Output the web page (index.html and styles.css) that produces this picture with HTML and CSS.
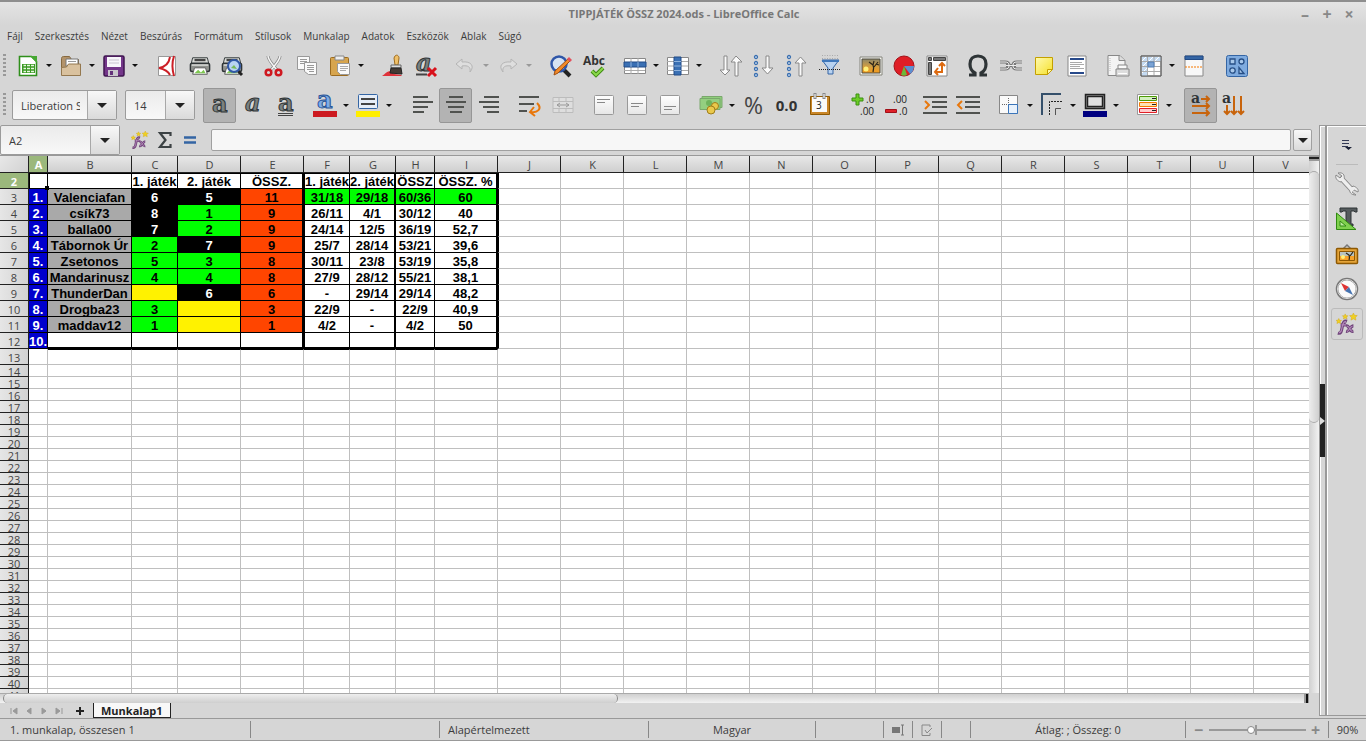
FILE: index.html
```html
<!DOCTYPE html>
<html lang="hu">
<head>
<meta charset="utf-8">
<title>TIPPJÁTÉK ÖSSZ 2024.ods - LibreOffice Calc</title>
<link rel="stylesheet" href="styles.css">
</head>
<body>
<svg class="defs" aria-hidden="true">
  <defs>
    <linearGradient id="sun" x1="0" y1="0" x2="0" y2="1"><stop offset="0" stop-color="#8d876a"/><stop offset=".6" stop-color="#d9a03c"/><stop offset="1" stop-color="#f59a1b"/></linearGradient>
    <linearGradient id="paper" x1="0" y1="0" x2="0" y2="1"><stop offset="0" stop-color="#fff"/><stop offset="1" stop-color="#e6e6e6"/></linearGradient>
    <linearGradient id="note" x1="0" y1="0" x2="1" y2="1"><stop offset="0" stop-color="#fffab0"/><stop offset="1" stop-color="#f5e02a"/></linearGradient>
  </defs>
  <symbol id="i-fx" viewBox="0 0 24 24"><path d="M2 22c4 1 4-3 5-8 1-4 2-6 5-5M5 13h6M11 14c4-1 3 7 8 6M19 14c-4 0-4 7-8 6" fill="none" stroke="#6f4379" stroke-width="3.400"/><path d="M3 21.500c3 .5 3-3 4-7.500 1-4 2-5 4-4.500M6 13h5M12 14.500c3-1 3 6 6 5.500M18 14.500c-3 0-4 6-6 5.500" fill="none" stroke="#b48abb" stroke-width="1.200"/><path d="M3 6l1 2 2 0-1.500 1.500.5 2-2-1-2 1 .5-2L0 8l2 0zM10 1l1 2h2l-1.500 1.500.5 2-2-1-2 1 .5-2L7 3h2zM19 0l1.200 2.500 3 .3-2 2 .5 3-2.700-1.400-2.700 1.400.5-3-2-2 3-.3z" fill="#f0d024" stroke="#d0a818" stroke-width=".5"/></symbol>
  <symbol id="i-sunset" viewBox="0 0 24 20"><path d="M1 1h22v18H1z" fill="#f5f5f0" stroke="#85857d"/><path d="M3 3h18v14H3z" fill="url(#sun)" stroke="#4c4a40"/><circle cx="7" cy="13" r="2.500" fill="#fff07a"/><path d="M14 16c1-4 1-5 0-7l-4-3M15 11l4-5M14 9l1-4M17 8l3 1" stroke="#2c2619" stroke-width="1.200" fill="none"/></symbol>
  <symbol id="i-printer" viewBox="0 0 24 22"><path d="M4 2h16l2 8H2z" fill="#d9dbd8" stroke="#2e3436"/><path d="M6 4.500h12" stroke="#444" stroke-width="2.500"/><rect x="1.500" y="8" width="21" height="9" rx="2" fill="#8f928e" stroke="#2e3436" stroke-width="1.500"/><path d="M3 10h18" stroke="#fff"/><path d="M6 13h12l2 7H4z" fill="#fff" stroke="#555"/><path d="M6 19l4-4 3 3 3-3 2 4z" fill="#7ec850"/></symbol>
</svg>

<header class="titlebar">
  <h1 class="title">TIPPJÁTÉK ÖSSZ 2024.ods - LibreOffice Calc</h1>
  <div class="winbtns"><button aria-label="Kis méret">–</button><button aria-label="Teljes méret">+</button><button aria-label="Bezárás">×</button></div>
</header>

<nav class="menubar">
  <button>Fájl</button><button>Szerkesztés</button><button>Nézet</button><button>Beszúrás</button><button>Formátum</button><button>Stílusok</button><button>Munkalap</button><button>Adatok</button><button>Eszközök</button><button>Ablak</button><button>Súgó</button>
</nav>

<div class="toolbar first">
  <span class="grip"></span>
  <button class="tool" aria-label="Új"><svg width="20" height="22"><path d="M1.500 1.500h12l5 5v14h-17z" fill="#fff" stroke="#2f8f1b" stroke-width="1.600"/><path d="M12 1h7v7z" fill="#46a832"/><path d="M4 9h13v9H4z" fill="#3a9a22"/><path d="M5.500 10.500h2.500M9 10.500h3M13 10.500h3M5.500 13.500h2.500M9 13.500h3M13 13.500h3M5.500 16.500h2.500M9 16.500h3M13 16.500h3" stroke="#e6f8de" stroke-width="1.500"/></svg></button><button class="drop" aria-label="Új menü"></button>
  <button class="tool" aria-label="Megnyitás"><svg width="22" height="22"><path d="M1.500 19V3.500c0-1 .5-2 2-2h6l2 3h7V19z" fill="#b3936a" stroke="#86693f"/><path d="M6 4h12v7H6z" fill="#fff" stroke="#777"/><path d="M8 6.500h8" stroke="#999"/><path d="M1.500 20.500v-8l5-.5 2-3h12v11.500z" fill="#d9c19e" stroke="#94784f"/></svg></button><button class="drop" aria-label="Megnyitás menü"></button>
  <button class="tool" aria-label="Mentés"><svg width="22" height="22"><rect x="1" y="1" width="20" height="20" rx="1.500" fill="#74368a" stroke="#3f1650" stroke-width="1.500"/><path d="M4 2h14v10H4z" fill="#f7f5fa"/><path d="M6 5h10M6 8h10" stroke="#c9c4d0"/><path d="M5 15h10v6H5z" fill="#c9c6cc"/><path d="M7 16h3v4H7z" fill="#63317a"/></svg></button><button class="drop" aria-label="Mentés menü"></button>
  <span class="sep l"></span>
  <button class="tool" aria-label="PDF"><svg width="20" height="22"><path d="M1.500 1.500h17v19h-17z" fill="#fff" stroke="#999"/><path d="M13 2C12 8 8 12 2 13c5 1 9 3 11 7M17 1c-2 6-2 13 0 20" fill="none" stroke="#cc2027" stroke-width="2"/></svg></button>
  <button class="tool" aria-label="Nyomtatás"><svg width="22" height="22"><use href="#i-printer"/></svg></button>
  <button class="tool" aria-label="Nyomtatási kép"><svg width="23" height="22"><use href="#i-printer" width="22" height="22"/><path d="M17 16l4 4" stroke="#222" stroke-width="3"/><circle cx="13" cy="11" r="6" fill="#b9d3f2" stroke="#3158a6" stroke-width="2"/><path d="M10 13l3-3 3 4z" fill="#78b957"/></svg></button>
  <span class="sep m"></span>
  <button class="tool" aria-label="Kivágás"><svg width="20" height="24"><path d="M4 2c0 4 4 8 10 15M16 2c0 4-4 8-10 15" stroke="#888" stroke-width="3" fill="none"/><path d="M4 2c0 4 4 8 9 14M16 2c0 4-4 8-9 14" stroke="#f6f6f6" stroke-width="1.500" fill="none"/><circle cx="4.500" cy="18.500" r="2.800" fill="none" stroke="#cf1820" stroke-width="2.500"/><circle cx="14.500" cy="18.500" r="2.800" fill="none" stroke="#cf1820" stroke-width="2.500"/></svg></button>
  <button class="tool" aria-label="Másolás"><svg width="22" height="22"><path d="M1.500 1.500h12v13h-12z" fill="#fafafa" stroke="#999"/><path d="M4 4.500h7M4 6.500h7M4 8.500h5" stroke="#999"/><path d="M8.500 7.500h12v12h-8l-4-3z" fill="#fafafa" stroke="#999"/><path d="M11 10.500h7M11 12.500h7M11 14.500h7M13 16.500h5" stroke="#999"/></svg></button>
  <button class="tool" aria-label="Beillesztés"><svg width="22" height="22"><rect x="1.500" y="2.500" width="18" height="18" rx="1" fill="#d7a54e" stroke="#9b6b1f"/><path d="M6 1h9v4H6z" fill="#eee" stroke="#888"/><path d="M8.500 8.500h12v11h-9l-3-3z" fill="#fafafa" stroke="#999"/><path d="M11 11.500h8M11 13.500h8M11 15.500h6" stroke="#aaa"/></svg></button><button class="drop" aria-label="Beillesztés menü"></button>
  <span class="sep l"></span>
  <button class="tool" aria-label="Formátummásolás"><svg width="24" height="24"><path d="M1 22c3-2 5-5 9-5l3 3 8 1-1 1z" fill="#e0323a"/><path d="M14 2c2-2 4 0 4 2l-1 7h-3l-1-7z" fill="#efc069" stroke="#a06b1c"/><path d="M10 11h10v3H10z" fill="#ddd" stroke="#666"/><path d="M10 14h10l1 6-12-1z" fill="#443a34" stroke="#222"/></svg></button>
  <button class="tool" aria-label="Formázás törlése"><svg width="22" height="24"><text x="1" y="17" class="ga gi">a</text><path d="M1 20.500h11" stroke="#444" stroke-width="2"/><path d="M13 14l8 8M21 14l-8 8" stroke="#d8121c" stroke-width="3"/></svg></button>
  <span class="sep s"></span>
  <button class="tool" aria-label="Visszavonás"><svg width="22" height="20"><path d="M8 3L2 8l6 5v-3c6-1 9 1 8 6 5-6 1-11-8-10z" fill="#dedede" stroke="#b5b5b5"/></svg></button><button class="drop dim" aria-label="Visszavonás menü"></button>
  <button class="tool" aria-label="Újra"><svg width="22" height="20"><path d="M14 3l6 5-6 5v-3c-6-1-9 1-8 6C1 10 5 5 14 6z" fill="#dedede" stroke="#b5b5b5"/></svg></button><button class="drop dim" aria-label="Újra menü"></button>
  <span class="sep l"></span>
  <button class="tool" aria-label="Keresés"><svg width="24" height="24"><path d="M15 16l6 6" stroke="#222" stroke-width="4"/><circle cx="10" cy="10" r="7.500" fill="#d5e2f2" stroke="#2f56a8" stroke-width="2.500"/><path d="M19 5l2 2L9 19l-4 2 1-4z" fill="#f08a2a" stroke="#a04f10"/><path d="M20 3l3 3-2 2-3-3z" fill="#e3505c"/></svg></button>
  <button class="tool" aria-label="Helyesírás"><svg width="24" height="24"><text x="1" y="11" class="abc">Abc</text><path d="M10 17l4 4 7-7" fill="none" stroke="#3e8a13" stroke-width="4"/><path d="M10 17l4 4 7-7" fill="none" stroke="#8ad84a" stroke-width="2"/></svg></button>
  <span class="sep m"></span>
  <button class="tool" aria-label="Sor"><svg width="24" height="20"><path d="M1.500 2.500h21v15h-21z" fill="#fff" stroke="#888"/><path d="M8 2v16M15 2v16M1 14.500h21" stroke="#aaa"/><path d="M1 6h22v5H1z" fill="#3a70b4" stroke="#204a87"/><path d="M8 6v5M15 6v5" stroke="#8fb3de"/></svg></button><button class="drop" aria-label="Sor menü"></button>
  <button class="tool" aria-label="Oszlop"><svg width="24" height="20"><path d="M1.500 1.500h21v17h-21z" fill="#fff" stroke="#888"/><path d="M1 5.500h21M1 10h21M1 14.500h21" stroke="#aaa"/><path d="M8 1h7v18H8z" fill="#3a70b4" stroke="#204a87"/><path d="M8 5.500h7M8 10h7M8 14.500h7" stroke="#8fb3de"/></svg></button><button class="drop" aria-label="Oszlop menü"></button>
  <span class="sep l"></span>
  <button class="tool" aria-label="Rendezés"><svg width="26" height="24"><path d="M6 2h3v14h3l-5 5-5-5h4zM17 22h3V8h4l-6-6-5 6h4z" fill="#fafafa" stroke="#888"/></svg></button>
  <button class="tool" aria-label="Növekvő"><svg width="22" height="24"><g fill="#eef4fb" stroke="#3a6fb0" stroke-width="1.300"><circle cx="3" cy="3" r="1.500"/><circle cx="3" cy="9" r="1.500"/><circle cx="3" cy="15" r="1.500"/><circle cx="3" cy="21" r="1.500"/></g><path d="M13 2h3v12h4l-5.500 6L9 14h4z" fill="#fafafa" stroke="#888"/></svg></button>
  <button class="tool" aria-label="Csökkenő"><svg width="22" height="24"><g fill="#eef4fb" stroke="#3a6fb0" stroke-width="1.300"><circle cx="3" cy="3" r="1.500"/><circle cx="3" cy="9" r="1.500"/><circle cx="3" cy="15" r="1.500"/><circle cx="3" cy="21" r="1.500"/></g><path d="M13 22h3V9h4l-5.500-6L9 9h4z" fill="#fafafa" stroke="#888"/></svg></button>
  <button class="tool" aria-label="Szűrő"><svg width="22" height="24"><path d="M3 1.500h17M3 4.500h17" stroke="#aaa" stroke-dasharray="1 1.500"/><path d="M3 6h17l-6 8v6h-5v-6z" fill="#b8d2f0" stroke="#3465a4"/><path d="M3 6h17v2H3z" fill="#3f78bb"/><path d="M0 15.500h22" stroke="#222" stroke-dasharray="1 1"/></svg></button>
  <span class="sep m"></span>
  <button class="tool" aria-label="Kép"><svg width="24" height="20"><use href="#i-sunset"/></svg></button>
  <button class="tool" aria-label="Diagram"><svg width="22" height="22"><circle cx="11" cy="11" r="10" fill="#df1e26" stroke="#a41219"/><path d="M11 11h10c0 4-2 7-4 8z" fill="#5c8fd0"/><path d="M11 11l3 9c-2 1-4 1-6 0z" fill="#6cb838"/></svg></button>
  <button class="tool" aria-label="Kimutatás"><svg width="22" height="22"><path d="M1 1h20v20H1z" fill="#fff" stroke="#888"/><path d="M2.500 2.500h3v3h-3zM7.500 2.500h12v3h-12zM2.500 7.500h3v12h-3z" fill="#777" stroke="#444"/><path d="M9 17h7V9M12 13l-3 4 3 3M13 11l3-3 3 3" stroke="#dd6a10" stroke-width="2" fill="none"/></svg></button>
  <span class="sep m"></span>
  <button class="tool" aria-label="Különleges karakter"><svg width="24" height="24"><path d="M3 21h6v-2C5 17 4 14 4 10c0-5 3-8 8-8s8 3 8 8c0 4-1 7-5 9v2h6" fill="none" stroke="#2e3436" stroke-width="3.200"/></svg></button>
  <button class="tool" aria-label="Hivatkozás"><svg width="22" height="20"><g fill="none" stroke="#777" stroke-width="3"><path d="M0 6h5c3 0 4 1 4 3.500S8 13 5 13H0M22 6h-5c-3 0-4 1-4 3.500s1 3.500 4 3.500h5M6 9.500h10"/></g><g fill="none" stroke="#eee"><path d="M0 6h5c3 0 4 1 4 3.500S8 13 5 13H0M22 6h-5c-3 0-4 1-4 3.500s1 3.500 4 3.500h5M6 9.500h10"/></g></svg></button>
  <button class="tool" aria-label="Megjegyzés"><svg width="20" height="20"><path d="M1.500 1.500h17v12l-5 5h-12z" fill="url(#note)" stroke="#c4a000"/><path d="M18.500 13.500h-5v5z" fill="#fff6a0" stroke="#c4a000"/></svg></button>
  <button class="tool" aria-label="Élőfej és élőláb"><svg width="20" height="22"><path d="M1 1h18v20H1z" fill="#fff" stroke="#888"/><path d="M3 3h14v2H3zM3 17h14v2H3z" fill="#27498a"/><path d="M3 7.500h12M3 9.500h14M3 11.500h10M3 13.500h14" stroke="#aaa"/></svg></button>
  <span class="sep m"></span>
  <button class="tool" aria-label="Nyomtatási tartomány"><svg width="24" height="24"><path d="M2 1.500h12l5 5v15H2z" fill="#f4f4f4" stroke="#888"/><path d="M4 4v14" stroke="#bbb" stroke-dasharray="1 1"/><path d="M13 1.500v5h6" fill="#ddd" stroke="#888"/><path d="M12 11h9v4h-9z" fill="#fafafa" stroke="#888"/><path d="M10 15h13v7H10z" fill="#ddd" stroke="#888"/><path d="M12 19.500h9" stroke="#fff"/></svg></button>
  <button class="tool" aria-label="Rögzítés"><svg width="22" height="22"><path d="M1 1h20v20H1z" fill="#fff" stroke="#666"/><path d="M2 2h19v4H7v15H2z" fill="#c5dbf2"/><path d="M2 6l4-4M2 12l5-5M2 18l5-5M9 6l4-4M15 6l4-4" stroke="#fff"/><path d="M1 6.500h20M7.500 1v20M14 1v20M1 11.500h20M1 16.500h20" stroke="#aaa"/><path d="M8 7h6v5H8z" fill="#7ba3d4" stroke="#4f7db5"/><path d="M1 1h20v20H1z" fill="none" stroke="#666"/></svg></button><button class="drop" aria-label="Rögzítés menü"></button>
  <button class="tool" aria-label="Felosztás"><svg width="20" height="22"><path d="M1 1h18v20H1z" fill="#f8f8f8" stroke="#888"/><path d="M1 1h18v3.500H1z" fill="#3465a4" stroke="#204a87"/><path d="M1 12h18" stroke="#f57900" stroke-dasharray="2 1"/></svg></button>
  <span class="sep l"></span>
  <button class="tool" aria-label="Rajzfunkciók"><svg width="22" height="22"><rect x=".5" y=".5" width="21" height="21" rx="2" fill="#7fabdf" stroke="#3465a4"/><g fill="#a9c8ea" stroke="#274f86" stroke-width="1.300"><path d="M4 4h5v5H4z"/><circle cx="15.500" cy="6.500" r="2.500"/><circle cx="6.500" cy="15.500" r="2.700"/><path d="M13 12.500v6h5z"/></g></svg></button>
</div>

<div class="toolbar">
  <span class="grip"></span>
  <div class="combo font"><input value="Liberation Sans" aria-label="Betűtípus"><button class="cbtn" aria-label="Betűtípus lista"></button></div>
  <div class="combo size"><input value="14" aria-label="Betűméret"><button class="cbtn" aria-label="Betűméret lista"></button></div>
  <button class="tool on" aria-label="Félkövér"><svg width="24" height="24"><text x="4" y="19" class="ga">a</text></svg></button>
  <button class="tool" aria-label="Dőlt"><svg width="24" height="24"><text x="4" y="18" class="ga gi">a</text></svg></button>
  <button class="tool" aria-label="Aláhúzott"><svg width="24" height="24"><text x="4" y="18" class="ga">a</text><path d="M4 20.500h15M4 22.500h15" stroke="#444"/></svg></button>
  <span class="sep s"></span>
  <button class="tool" aria-label="Betűszín"><svg width="24" height="24"><text x="4" y="15" class="ga blue">a</text><path d="M0 18h24v6H0z" fill="#cc1a20"/></svg></button><button class="drop" aria-label="Betűszín menü"></button>
  <button class="tool" aria-label="Kiemelés"><svg width="24" height="24"><rect x="2.500" y="1.500" width="19" height="14" rx="1" fill="#e6edf7" stroke="#3465a4"/><path d="M5 6h14M5 11h14" stroke="#444" stroke-width="2"/><path d="M0 18h24v6H0z" fill="#ffee00"/></svg></button><button class="drop" aria-label="Kiemelés menü"></button>
  <span class="sep xl"></span>
  <button class="tool" aria-label="Balra"><svg width="22" height="22" class="lines"><path d="M1 3h15M1 8h20M1 13h15M1 18h11"/></svg></button>
  <button class="tool on" aria-label="Középre"><svg width="22" height="22" class="lines"><path d="M4 3h14M1 8h20M3 13h16M5 18h12"/></svg></button>
  <button class="tool" aria-label="Jobbra"><svg width="22" height="22" class="lines"><path d="M6 3h15M1 8h20M5 13h16M9 18h12"/></svg></button>
  <span class="sep m"></span>
  <button class="tool" aria-label="Tördelés"><svg width="24" height="24" class="lines"><path d="M1 4h20M1 11h15M1 18h8"/><path class="or" d="M19 10c6 6 0 10-6 9M16 14l-4 5 5 4"/></svg></button>
  <button class="tool" aria-label="Cellák egyesítése"><svg width="22" height="18"><path d="M1 1.500h20v15H1zM1 5.500h20M1 12.500h20M7 1v4M14 1v4M7 12v4M14 12v4" fill="#dedede" stroke="#bcbcbc"/><path d="M5 9h12M8 7L5 9l3 2M14 7l3 2-3 2" fill="none" stroke="#999"/></svg></button>
  <span class="sep m"></span>
  <button class="tool" aria-label="Felülre"><svg width="20" height="20"><rect x=".5" y=".5" width="19" height="19" rx="1" fill="url(#paper)" stroke="#999"/><path d="M3 4.500h13M3 7.500h8" stroke="#888"/></svg></button>
  <button class="tool" aria-label="Középre függőlegesen"><svg width="20" height="20"><rect x=".5" y=".5" width="19" height="19" rx="1" fill="url(#paper)" stroke="#999"/><path d="M4 8.500h12M4 11.500h8" stroke="#888"/></svg></button>
  <button class="tool" aria-label="Alulra"><svg width="20" height="20"><rect x=".5" y=".5" width="19" height="19" rx="1" fill="url(#paper)" stroke="#999"/><path d="M4 11.500h12M4 14.500h8" stroke="#888"/></svg></button>
  <span class="sep m"></span>
  <button class="tool" aria-label="Pénznem"><svg width="24" height="20"><path d="M3 1.500h20v11H3z" fill="#8fce7c" stroke="#7aa86c"/><path d="M1 3.500h20v11H1z" fill="#94cf80" stroke="#7aa86c"/><circle cx="10" cy="8" r="3" fill="#6fb35c"/><circle cx="16" cy="11" r="3.500" fill="#eac94c" stroke="#a07d1a"/><circle cx="12" cy="15" r="4" fill="#eac94c" stroke="#a07d1a"/></svg></button><button class="drop" aria-label="Pénznem menü"></button>
  <button class="tool pct" aria-label="Százalék">%</button>
  <button class="tool num" aria-label="Szám">0.0</button>
  <button class="tool" aria-label="Dátum"><svg width="22" height="24"><path d="M1.500 3.500h19v18h-19z" fill="#c98628" stroke="#8f5902"/><path d="M3 4h15v15H3z" fill="#fafafa"/><path d="M6 0v6M15 0v6" stroke="#888" stroke-width="3"/><path d="M6 1v4M15 1v4" stroke="#fff"/><text x="7" y="16" class="tiny">3</text></svg></button>
  <span class="sep l"></span>
  <button class="tool" aria-label="Tizedesjegy hozzáadása"><svg width="24" height="24"><path d="M5 1h3v4h4v3H8v4H5V8H1V5h4z" fill="#6ccc28" stroke="#3a9010"/><text x="15" y="10" class="tiny">.0</text><text x="9" y="22" class="tiny">.00</text></svg></button>
  <button class="tool" aria-label="Tizedesjegy törlése"><svg width="24" height="24"><path d="M1.500 16.500h11v3h-11z" fill="#e02028" stroke="#a01018"/><text x="9" y="10" class="tiny">.00</text><text x="15" y="22" class="tiny">.0</text></svg></button>
  <span class="sep s"></span>
  <button class="tool" aria-label="Behúzás növelése"><svg width="24" height="24" class="lines"><path d="M0 4h24M9 9h15M9 14h15M0 20h24"/><path class="or" d="M2 8l4 4-4 4"/></svg></button>
  <button class="tool" aria-label="Behúzás csökkentése"><svg width="24" height="24" class="lines"><path d="M0 4h24M9 9h15M9 14h15M0 20h24"/><path class="or" d="M6 8l-4 4 4 4"/></svg></button>
  <span class="sep m"></span>
  <button class="tool" aria-label="Szegélyek"><svg width="20" height="20"><path d="M.5.500h18v18H.5z" fill="#fafafa" stroke="#888"/><path d="M3 9.500h14M9.500 3v14" stroke="#666" stroke-dasharray="1 1"/><path d="M9.500 9.500h9v9h-9z" fill="#e8f1fb" stroke="#3a75ba"/></svg></button><button class="drop" aria-label="Szegélyek menü"></button>
  <button class="tool" aria-label="Szegélystílus"><svg width="22" height="24"><path d="M1 22V1h19" fill="none" stroke="#35506b" stroke-width="2"/><path d="M8.500 22V8.500H22" fill="none" stroke="#222" stroke-dasharray="2 1"/><path d="M14.500 22v-6.500H20" fill="none" stroke="#555"/></svg></button><button class="drop" aria-label="Szegélystílus menü"></button>
  <button class="tool" aria-label="Szegélyszín"><svg width="24" height="24"><path d="M3.500 2.500h17v12h-17z" fill="#e0e0e0" stroke="#222" stroke-width="3.500"/><path d="M3.500 2.500h17v12h-17z" fill="none" stroke="#666"/><path d="M0 18h24v6H0z" fill="#000080"/></svg></button><button class="drop" aria-label="Szegélyszín menü"></button>
  <span class="sep l"></span>
  <button class="tool" aria-label="Feltételes formázás"><svg width="22" height="22"><path d="M.5.500h21v20H.5z" fill="#fff" stroke="#999"/><path d="M2.500 2.500h17v4h-17z" fill="#d2f0bd" stroke="#4e9a06"/><path d="M2.500 8.500h17v4h-17z" fill="#fde2b6" stroke="#f57900"/><path d="M2.500 14.500h17v4h-17z" fill="#fcc" stroke="#e02028"/><path d="M15 4.500h4M15 10.500h4M15 16.500h4" stroke="#222"/></svg></button><button class="drop" aria-label="Feltételes formázás menü"></button>
  <span class="sep l"></span>
  <button class="tool on" aria-label="Balról jobbra"><svg width="22" height="24"><text x="1" y="10" class="ga sm">a</text><path d="M11 6h7M2 13h16M2 20h16M16 3l3 3-3 3M16 10l3 3-3 3M16 17l3 3-3 3" fill="none" stroke="#c8640c" stroke-width="2"/></svg></button>
  <button class="tool" aria-label="Fentről lefelé"><svg width="24" height="24"><text x="0" y="10" class="ga sm">a</text><path d="M5 12v9M12 3v18M19 3v18M2 18l3 3 3-3M9 18l3 3 3-3M16 18l3 3 3-3" fill="none" stroke="#c8640c" stroke-width="2"/></svg></button>
</div>

<div class="work">
  <main class="left">
    <div class="formula">
      <div class="combo name"><input value="A2" aria-label="Név mező"><button class="cbtn" aria-label="Név lista"></button></div>
      <div class="fbtns">
        <button aria-label="Függvénytündér"><svg width="18" height="18"><use href="#i-fx"/></svg></button>
        <button aria-label="Összeg"><svg width="14" height="18"><path d="M12.500 5V2H2l5.500 7L2 16h10.500v-3" fill="none" stroke="#3c4244" stroke-width="2.200"/></svg></button>
        <button aria-label="Képlet"><svg width="14" height="10"><path d="M1 2.500h12M1 7.500h12" stroke="#3465a4" stroke-width="2.500"/></svg></button>
      </div>
      <input class="finput" aria-label="Beviteli sor">
      <button class="cbtn expand" aria-label="Kibontás"></button>
    </div>
    <div class="sheet">
      <div class="grid" id="grid"><table id="cells"></table></div>
      <div class="vscroll"><span class="split"></span><span class="vthumb"></span></div>
    </div>
    <div class="hscroll"><span class="hthumb"></span><span class="hsplit"></span></div>
    <div class="tabs">
      <div class="tabnav">
        <button aria-label="Első"><svg width="8" height="8"><path d="M1 1v6M7 1v6L3 4z"/></svg></button>
        <button aria-label="Előző"><svg width="8" height="8"><path d="M6 1v6L2 4z"/></svg></button>
        <button aria-label="Következő"><svg width="8" height="8"><path d="M2 1v6l4-3z"/></svg></button>
        <button aria-label="Utolsó"><svg width="8" height="8"><path d="M1 1v6l4-3zM7 1v6"/></svg></button>
      </div>
      <button class="addtab" aria-label="Új munkalap"><svg width="8" height="8"><path d="M4 0v8M0 4h8" stroke="#222" stroke-width="2"/></svg></button>
      <button class="tab">Munkalap1</button>
    </div>
  </main>
  <div class="splitter"><button aria-label="Oldalsáv elrejtése"></button></div>
  <aside class="sidebar">
    <button class="sbmenu" aria-label="Beállítások"><svg width="12" height="12"><path d="M1 1.500h7M1 4.500h7M1 7.500h6" stroke="#333a55"/><path d="M4 8h7L7.500 11z" fill="#1a2035"/></svg></button>
    <button class="sb" aria-label="Tulajdonságok"><svg width="24" height="24"><path d="M5 5l13 14" stroke="#888" stroke-width="5.500"/><path d="M3 1c5-1 7 2 6 6L6 10C2 9 0 6 1 3l4 3 2-2zM21 23c-5 0-7-3-6-6l3-3c4 1 6 4 5 6l-4-2-2 2z" fill="#eee" stroke="#888"/><path d="M6 6l12 13" stroke="#eee" stroke-width="3.500"/></svg></button>
    <button class="sb" aria-label="Stílusok"><svg width="24" height="24"><path d="M5 1h17v4h-2l-1-1h-3v13h2v2h-8v-2h1V4H8L7 5H5z" fill="#555b5d" stroke="#2e3436"/><path d="M1.500 6v16.500H21z" fill="#7fd04e" stroke="#2f8a10"/><path d="M5 14v5h6z" fill="#bceaa0" stroke="#2f8a10"/></svg></button>
    <button class="sb" aria-label="Képtár"><svg width="24" height="22"><path d="M8 6l4-4 4 4" fill="none" stroke="#777" stroke-width="1.500"/><rect x="1.500" y="5.500" width="21" height="15" rx="1" fill="#e5a53a" stroke="#8f5902" stroke-width="1.500"/><path d="M4.500 8.500h15v9h-15z" fill="#b9c4c0" stroke="#8f5902"/><path d="M5 13h14v4H5z" fill="#f7a32a"/><circle cx="8" cy="14" r="2" fill="#fff07a"/><path d="M14 17c1-3 0-4 0-5l-3-2M15 13l3-4" fill="none" stroke="#2c2619" stroke-width="1.200"/></svg></button>
    <button class="sb" aria-label="Navigátor"><svg width="24" height="24"><circle cx="12" cy="12" r="10" fill="#fafafa" stroke="#777" stroke-width="2.500"/><circle cx="12" cy="12" r="9.500" fill="none" stroke="#ddd"/><path d="M6 6l8 4-4 4z" fill="#d33"/><path d="M18 18l-8-4 4-4z" fill="#4573b0"/></svg></button>
    <button class="sb active" aria-label="Függvények"><svg width="22" height="22"><use href="#i-fx"/></svg></button>
  </aside>
</div>

<footer class="status">
  <span class="w1">1. munkalap, összesen 1</span><span class="w2"></span><span class="w3">Alapértelmezett</span><span class="w4">Magyar</span><span class="w5"></span>
  <span class="w6"><svg width="14" height="12"><path d="M1 3h8v6H1z" fill="#777"/><path d="M11.500 1v10M10 1h3M10 11h3" stroke="#777"/></svg></span>
  <span class="w6"><svg width="14" height="12"><path d="M10 9v2.500H2V1h8v2M5 6l2 3 5-5" fill="none" stroke="#888"/></svg></span>
  <span class="w6"></span><span class="w7">Átlag: ; Összeg: 0</span>
  <span class="w8"><button aria-label="Kicsinyítés">−</button><input type="range" min="0" max="100" value="43" aria-label="Nagyítás"><button aria-label="Nagyítás növelése">+</button></span>
  <span class="w9">90%</span>
</footer>
<script src="sheet.js"></script>
</body>
</html>
```
FILE: styles.css
```css
* { box-sizing: border-box; }
html, body { height: 100%; }
body { margin: 0; display: flex; flex-direction: column; background: #d6d6d6; color: #3c3c3c; font: 11px "Open Sans", "Noto Sans", sans-serif; overflow: hidden; }
button, input { font: inherit; color: inherit; margin: 0; padding: 0; border: 0; background: none; }
button { display: flex; align-items: center; justify-content: center; }
svg { display: block; flex: none; overflow: visible; }
.defs { position: absolute; width: 0; height: 0; }

.titlebar { display: flex; align-items: center; height: 25px; flex: none; border-top: 2px solid #8e8e8e; background: linear-gradient(#e4e4e4, #d6d6d6); padding-left: 71px; }
.title { flex: 1; margin: 0; text-align: center; font-size: 11px; line-height: 16px; font-weight: bold; color: #777; }
.winbtns { display: flex; width: 69px; gap: 6px; }
.winbtns button { width: 16px; height: 16px; font-size: 16px; line-height: 16px; font-weight: bold; color: #888; }

.menubar { display: flex; flex: none; height: 21px; gap: 12px; padding-left: 7px; font-size: 10px; }

.toolbar { display: flex; flex: none; align-items: center; height: 40px; }
.toolbar.first { height: 39px; }
.grip { width: 3px; height: 24px; margin: 0 6px 0 3px; background: repeating-linear-gradient(#999 0 2px, #d6d6d6 2px 4px); }
.grip + .tool { margin-left: -1px; }
.tool { width: 33px; height: 35px; flex: none; border-radius: 2px; }
.tool.on { background: #b3b3b3; border: 1px solid #969696; }
.drop, .cbtn { flex: none; }
.drop { width: 10px; height: 35px; }
.drop::after { content: ""; border: 3px solid transparent; border-top-color: #111; border-bottom: 0; }
.drop.dim::after { border-top-color: #999; }
.sep { flex: none; }
.sep.s { width: 6px; }
.sep.m { width: 8px; }
.sep.l { width: 10px; }
.sep.xl { width: 12px; }
.combo { display: flex; flex: none; height: 30px; border: 1px solid #9b9b9b; border-radius: 2px; background: linear-gradient(#ebebeb, #f8f8f8); }
.combo input { flex: 1; width: 0; min-width: 0; margin: 0 7px 0 8px; font-size: 11px; }
.combo.font { width: 105px; margin-right: 8px; }
.combo.size { width: 70px; margin-right: 8px; }
.cbtn { width: 29px; border-left: 1px solid #a8a8a8; background: linear-gradient(#f8f8f8, #dadada); }
.cbtn::after { content: ""; border: 5px solid transparent; border-top-color: #222; border-bottom: 0; }

.ga { font: bold 24px "DejaVu Serif", serif; fill: #7b817f; stroke: #2e3436; stroke-width: 1px; }
.ga.gi { font-style: italic; }
.ga.blue { fill: #7dabe6; stroke: #2a5596; }
.ga.sm { font-size: 14px; fill: #2e3436; stroke: none; }
.abc { font: bold 12px "Open Sans", sans-serif; fill: #333; }
.tiny { font: 10px "Open Sans", sans-serif; fill: #222; }
.lines path { fill: none; stroke: #50524f; stroke-width: 2px; }
.lines .or { stroke: #e8770c; }
.pct { font-size: 23px; color: #444; }
.num { font-size: 15px; font-weight: bold; color: #333; }

.work { display: flex; flex: 1; min-height: 0; }
.left { display: flex; flex-direction: column; flex: 1; min-width: 0; }
.formula { display: flex; flex: none; align-items: center; height: 31px; border-bottom: 1px solid #999; padding-right: 7px; }
.combo.name { width: 120px; }
.fbtns { display: flex; width: 91px; padding-left: 8px; gap: 1px; }
.fbtns button { width: 24px; height: 24px; }
.finput { flex: 1; height: 22px; border: 1px solid #a0a0a0; border-radius: 2px; background: #f7f7f7; }
.expand { width: 19px; height: 22px; margin-left: 2px; border: 1px solid #a0a0a0; border-radius: 2px; }
.sheet { display: flex; flex: 1; min-height: 0; }
.grid { flex: 1; min-width: 0; overflow: hidden; background: #fff; }
table { border-collapse: separate; border-spacing: 0; table-layout: fixed; width: 0; }
th, td { padding: 0; height: 12px; line-height: 11px; white-space: nowrap; text-align: center; vertical-align: middle; border: 0 solid #bfbfbf; border-width: 0 1px 1px 0; }
th { font-weight: normal; font-size: 11px; color: #444; border-color: #222; }
thead th { height: 17px; padding-left: 1px; background: linear-gradient(#e8e8e8, #cfcfcf); }
tbody th { padding-top: 2px; line-height: 9px; background: linear-gradient(90deg, #e6e6e6, #d2d2d2); }
thead th:first-child { background: linear-gradient(135deg, #e8e8e8, #d2d2d2); }
thead th.sel, tbody th.sel { background: #9bb87c; color: #fff; font-weight: bold; }
tr.tall th, tr.tall td { height: 16px; line-height: 13px; }
.data td { font: bold 13px "Liberation Sans", sans-serif; }
.data td.c { padding-top: 2px; line-height: 13px; border-color: #000; color: #000; }
.data td.top { padding-top: 1px; border-top: 1px solid #000; }
.data td.thick { border-right-width: 2px; }
.data td.after { border-left: 1px solid #000; }
.data td.bottom { padding-top: 1px; border-bottom-width: 2px; }
td.under { border-top: 1px solid #000; }
.data td.num { background: #0000cd; color: #fff; }
.data td.grey { background: #a9a9a9; }
.data td.black { background: #000; color: #fff; }
.data td.green { background: #00ff00; }
.data td.yellow { background: #fff200; }
.data td.orange { background: #ff4500; }
.data td.cursor { position: relative; padding: 0; border: 1px solid #000; }
.cursor::after { content: ""; position: absolute; right: -2px; bottom: -2px; width: 4px; height: 4px; background: #000; }

.vscroll { display: flex; flex-direction: column; width: 10px; flex: none; background: linear-gradient(90deg, #d0d0d0, #f2f2f2); }
.split { height: 5px; margin-bottom: 10px; background: linear-gradient(#999 1px, #222 1px 3px, #999 3px); }
.vthumb { height: 47%; border: 1px solid #aaa; border-width: 1px 0; border-radius: 5px; background: linear-gradient(90deg, #eee, #cfcfcf); }
.hscroll { display: flex; flex: none; justify-content: space-between; height: 10px; margin-right: 10px; border-top: 1px solid #aaa; background: linear-gradient(#d0d0d0, #f2f2f2); }
.hthumb { width: 47%; margin-left: 3px; border: 1px solid #888; border-width: 0 1px; border-radius: 5px; background: linear-gradient(#eee, #cfcfcf); }
.hsplit { width: 5px; background: linear-gradient(90deg, #999 2px, #111 2px 4px, #999 4px); }
.tabs { display: flex; flex: none; height: 15px; }
.tabnav { display: flex; gap: 7px; padding-left: 10px; }
.tabnav svg { fill: #999; stroke: #999; }
.addtab { width: 27px; margin-left: 3px; }
.tab { height: 15px; padding: 0 7px; font-weight: bold; font-size: 11px; line-height: 13px; color: #222; background: #f8f8f8; border: 1px solid #222; border-top: 0; }
.splitter { display: flex; width: 8px; flex: none; margin-bottom: 2px; border: 1px solid #999; border-right-width: 2px; box-shadow: inset 1px 1px #fff; }
.splitter button { width: 6px; height: 73px; margin: auto 0; background: #222; }
.splitter button::after { content: ""; border: 4px solid transparent; border-left: 5px solid #ddd; border-right: 0; }
.sidebar { display: flex; flex-direction: column; align-items: center; flex: none; width: 39px; margin-bottom: 2px; gap: 3px; border: 1px solid #999; border-width: 1px 0; box-shadow: inset 1px 1px #fff; }
.sbmenu { width: 22px; height: 39px; border-bottom: 1px solid #bbb; }
.sb { width: 32px; height: 32px; }
.sb.active { border: 1px solid #bbb; border-radius: 3px; }

.status { display: flex; flex: none; height: 23px; align-items: center; border: 1px solid #999; border-width: 1px 0; }
.status span { display: flex; align-items: center; justify-content: center; height: 17px; border-right: 1px solid #888; white-space: nowrap; }
.status .w1 { flex: 1 1 251px; justify-content: flex-start; padding-left: 10px; }
.status .w2 { flex: 1 1 189px; }
.status .w3 { flex: 1 1 209px; justify-content: flex-start; padding-left: 8px; }
.status .w4 { flex: 1 1 167px; }
.status .w5 { flex: 1 1 68px; }
.status .w6 { flex: 0 0 29px; }
.status .w7 { flex: 1 1 215px; }
.status .w8 { flex: 0 0 143px; gap: 5px; }
.status .w9 { flex: 0 0 37px; border: 0; }
.w8 button { font-size: 16px; line-height: 16px; font-weight: bold; color: #888; width: 10px; }
.w8 input { appearance: none; width: 97px; height: 12px; background: linear-gradient(#999, #999) 49% 50% / 2px 10px no-repeat, linear-gradient(#999, #999) 0 50% / 100% 2px no-repeat; }
.w8 input::-webkit-slider-thumb { appearance: none; width: 8px; height: 8px; border: 1px solid #888; border-radius: 50%; background: #fff; }
```
FILE: sheet.js
```js
const widths = { A: 19, B: 84, C: 46, D: 63, E: 63, F: 46, G: 46, H: 39, I: 63 };
const alphabet = 'ABCDEFGHIJKLMNOPQRSTUVWXYZ'.split('');

// Text of A..I in rows 2-12
const data = [
  ['', '', '1. játék', '2. játék', 'ÖSSZ.', '1. játék', '2. játék', 'ÖSSZ', 'ÖSSZ. %'],
  ['1.', 'Valenciafan', '6', '5', '11', '31/18', '29/18', '60/36', '60'],
  ['2.', 'csík73', '8', '1', '9', '26/11', '4/1', '30/12', '40'],
  ['3.', 'balla00', '7', '2', '9', '24/14', '12/5', '36/19', '52,7'],
  ['4.', 'Tábornok Úr', '2', '7', '9', '25/7', '28/14', '53/21', '39,6'],
  ['5.', 'Zsetonos', '5', '3', '8', '30/11', '23/8', '53/19', '35,8'],
  ['6.', 'Mandarinusz', '4', '4', '8', '27/9', '28/12', '55/21', '38,1'],
  ['7.', 'ThunderDan', '', '6', '6', '-', '29/14', '29/14', '48,2'],
  ['8.', 'Drogba23', '3', '', '3', '22/9', '-', '22/9', '40,9'],
  ['9.', 'maddav12', '1', '', '1', '4/2', '-', '4/2', '50'],
  ['10.', '', '', '', '', '', '', '', '']
];

function fill(r, c, text) {
  if (c === 0) return r > 0 ? 'num' : '';
  if (r === 0 || r === 10) return '';
  if (c === 1) return 'grey';
  if (c === 4) return 'orange';
  if (c < 4) return text === '' ? 'yellow' : Number(text) > 5 || r === 1 ? 'black' : 'green';
  return r === 1 ? 'green' : '';
}

function cell(r, c) {
  if (r === 11 && c > 0 && c < 9) return '<td class="under"></td>';
  if (r > 10) return '<td></td>';
  if (c > 8) return c === 9 ? '<td class="after"></td>' : '<td></td>';
  const text = data[r][c];
  const cls = ['c', fill(r, c, text)];
  if (r === 0) cls.push(c === 0 ? 'cursor' : 'top');
  if (r === 10 && c > 0) cls.push('bottom');
  if (c === 4 || c === 6 || c === 8) cls.push('thick');
  if (c === 5) cls.push('after');
  return `<td class="${cls.join(' ').trim()}">${text}</td>`;
}

// Draws as many rows and columns as the grid area shows
function draw() {
  const area = document.getElementById('grid');
  const letters = [];
  for (let x = 29; x < area.clientWidth && letters.length < alphabet.length;) {
    const l = alphabet[letters.length];
    letters.push(l);
    x += widths[l] || 63;
  }
  const lastRow = 13 + Math.max(0, Math.ceil((area.clientHeight - 209) / 12));

  let html = '<colgroup><col style="width:29px">' +
    letters.map(l => `<col style="width:${widths[l] || 63}px">`).join('') + '</colgroup>';
  html += '<thead><tr><th></th>' +
    letters.map(l => `<th scope="col"${l === 'A' ? ' class="sel"' : ''}>${l}</th>`).join('') + '</tr></thead><tbody>';
  for (let n = 2; n <= lastRow; n++) {
    const r = n - 2;
    const rowClass = n <= 12 ? 'tall data' : n === 13 ? 'tall' : '';
    html += `<tr class="${rowClass}"><th scope="row"${n === 2 ? ' class="sel"' : ''}>${n}</th>` +
      letters.map((l, c) => cell(r, c)).join('') + '</tr>';
  }
  document.getElementById('cells').innerHTML = html + '</tbody>';
}

draw();
window.addEventListener('resize', draw);
```
